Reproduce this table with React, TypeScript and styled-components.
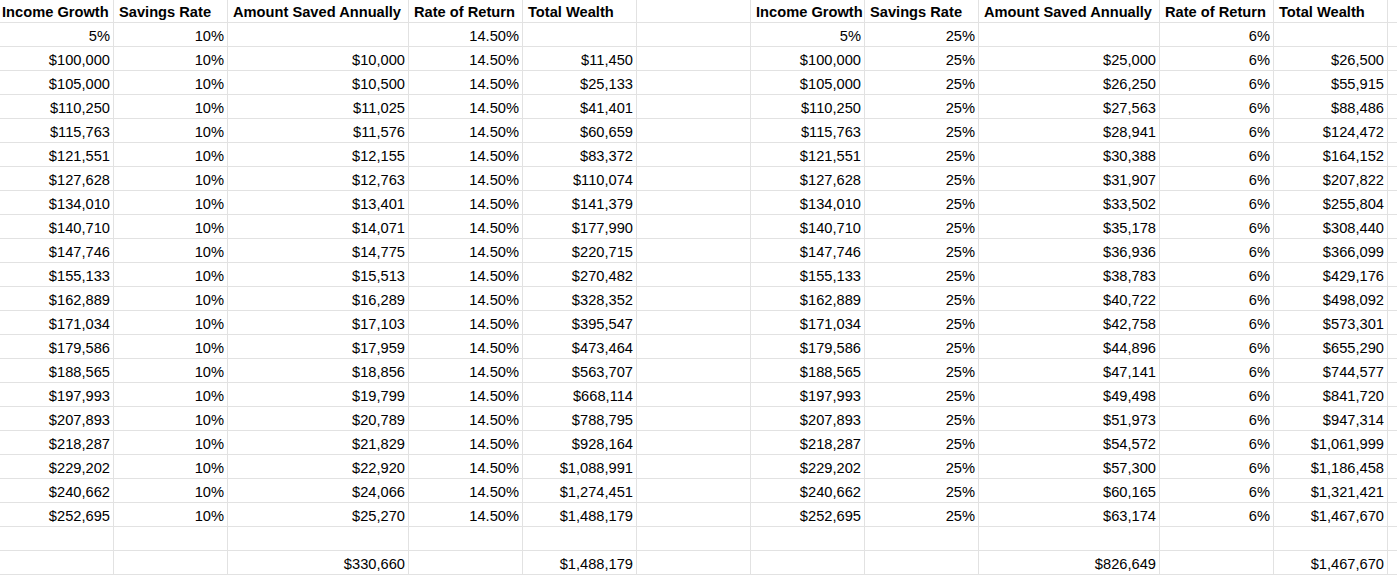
import React from "react";
import styled, { createGlobalStyle } from "styled-components";

const GlobalStyle = createGlobalStyle`
  html, body {
    margin: 0;
    padding: 0;
    background: #ffffff;
    overflow: hidden;
  }
  body {
    font-family: "Liberation Sans", Arial, sans-serif;
    color: #000000;
  }
`;

const Viewport = styled.div`
  width: 1397px;
  height: 580px;
  overflow: hidden;
`;

const Sheet = styled.div`
  display: grid;
  grid-template-columns: 117px 114px 181px 114px 114px 114px 114px 114px 181px 114px 114px 114px;
  grid-template-rows: 23px;
  grid-auto-rows: 24px;
  margin-left: -3px;
  width: max-content;
`;

const Cell = styled.div<{ $align?: "left" | "right"; $bold?: boolean }>`
  box-sizing: border-box;
  border-right: 1px solid #e2e2e2;
  border-bottom: 1px solid #e2e2e2;
  display: flex;
  align-items: flex-end;
  justify-content: ${(p) => (p.$align === "right" ? "flex-end" : "flex-start")};
  padding: 0 3px 1px 5px;
  font-size: 14.67px;
  line-height: 17px;
  font-weight: ${(p) => (p.$bold ? 700 : 400)};
  white-space: nowrap;
  overflow: hidden;
`;

const headers = ["Income Growth", "Savings Rate", "Amount Saved Annually", "Rate of Return", "Total Wealth"];

const income = [
  "$100,000", "$105,000", "$110,250", "$115,763", "$121,551", "$127,628", "$134,010",
  "$140,710", "$147,746", "$155,133", "$162,889", "$171,034", "$179,586", "$188,565",
  "$197,993", "$207,893", "$218,287", "$229,202", "$240,662", "$252,695",
];

const leftSaved = [
  "$10,000", "$10,500", "$11,025", "$11,576", "$12,155", "$12,763", "$13,401", "$14,071",
  "$14,775", "$15,513", "$16,289", "$17,103", "$17,959", "$18,856", "$19,799", "$20,789",
  "$21,829", "$22,920", "$24,066", "$25,270",
];

const leftWealth = [
  "$11,450", "$25,133", "$41,401", "$60,659", "$83,372", "$110,074", "$141,379", "$177,990",
  "$220,715", "$270,482", "$328,352", "$395,547", "$473,464", "$563,707", "$668,114",
  "$788,795", "$928,164", "$1,088,991", "$1,274,451", "$1,488,179",
];

const rightSaved = [
  "$25,000", "$26,250", "$27,563", "$28,941", "$30,388", "$31,907", "$33,502", "$35,178",
  "$36,936", "$38,783", "$40,722", "$42,758", "$44,896", "$47,141", "$49,498", "$51,973",
  "$54,572", "$57,300", "$60,165", "$63,174",
];

const rightWealth = [
  "$26,500", "$55,915", "$88,486", "$124,472", "$164,152", "$207,822", "$255,804", "$308,440",
  "$366,099", "$429,176", "$498,092", "$573,301", "$655,290", "$744,577", "$841,720",
  "$947,314", "$1,061,999", "$1,186,458", "$1,321,421", "$1,467,670",
];

type Row = string[];

const rows: Row[] = [
  ["5%", "10%", "", "14.50%", "", "", "5%", "25%", "", "6%", "", ""],
  ...income.map((inc, i) => [
    inc, "10%", leftSaved[i], "14.50%", leftWealth[i], "",
    inc, "25%", rightSaved[i], "6%", rightWealth[i], "",
  ]),
  ["", "", "", "", "", "", "", "", "", "", "", ""],
  ["", "", "$330,660", "", "$1,488,179", "", "", "", "$826,649", "", "$1,467,670", ""],
];

const headerRow: Row = [...headers, "", ...headers, ""];

export default function App() {
  return (
    <Viewport>
      <GlobalStyle />
      <Sheet>
        {headerRow.map((h, i) => (
          <Cell key={`h${i}`} $bold>
            {h}
          </Cell>
        ))}
        {rows.map((r, ri) =>
          r.map((v, ci) => (
            <Cell key={`${ri}-${ci}`} $align="right">
              {v}
            </Cell>
          ))
        )}
      </Sheet>
    </Viewport>
  );
}
